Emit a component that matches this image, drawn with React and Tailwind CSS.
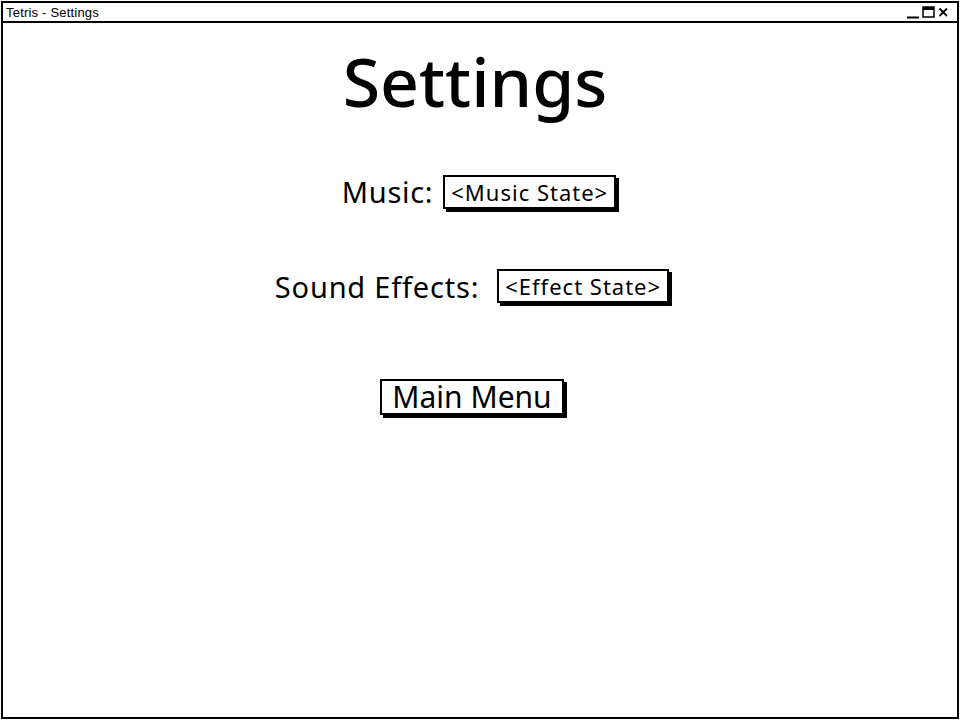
import React from 'react'

const FONT = { fontFamily: '"Noto Sans", "Open Sans", sans-serif' }

function WindowButtons() {
  return (
    <svg width="44" height="14" viewBox="0 0 44 14" className="shrink-0">
      <path d="M0 12.5 H12" stroke="black" strokeWidth="2" />
      <rect x="16" y="2" width="11" height="10" fill="none" stroke="black" strokeWidth="1.5" />
      <rect x="16" y="2" width="11" height="3" fill="black" />
      <path d="M32.5 3.5 L40 11 M40 3.5 L32.5 11" stroke="black" strokeWidth="1.8" />
    </svg>
  )
}

function StateBox({ children }) {
  return (
    <div className="border-2 border-black bg-white px-[6px] py-[2px] text-[22px] leading-[26px] tracking-[1px] shadow-[3px_3px_0_0_#000]">
      {children}
    </div>
  )
}

export default function App() {
  return (
    <div className="w-[960px] h-[720px] bg-white p-[1px]" style={FONT}>
      <div className="w-full h-full border-2 border-black flex flex-col">
        {/* Title bar */}
        <div className="h-[20px] border-b-2 border-black flex items-center justify-between pl-[3px] pr-[6px] shrink-0">
          <span className="text-[13px] leading-none tracking-[0.2px]" style={{ fontFamily: '"Liberation Sans", sans-serif' }}>Tetris - Settings</span>
          <WindowButtons />
        </div>

        {/* Content */}
        <div className="flex-1 flex flex-col items-center pr-[10px]">
          <h1 className="mt-[16px] text-[68px] leading-[84px] font-medium">Settings</h1>

          <div className="mt-[47px] flex items-center gap-[10px] ml-[8px]">
            <span className="text-[29px] tracking-[0.7px]">Music:</span>
            <StateBox>&lt;Music State&gt;</StateBox>
          </div>

          <div className="mt-[51px] flex items-center gap-[18px] mr-[6px]">
            <span className="text-[29px] tracking-[0.8px]">Sound Effects:</span>
            <StateBox>&lt;Effect State&gt;</StateBox>
          </div>

          <div className="mt-[71px] mr-[6px] border-2 border-black bg-white px-[10px] text-[30px] leading-[32px] shadow-[3px_3px_0_0_#000]">
            Main Menu
          </div>
        </div>
      </div>
    </div>
  )
}
